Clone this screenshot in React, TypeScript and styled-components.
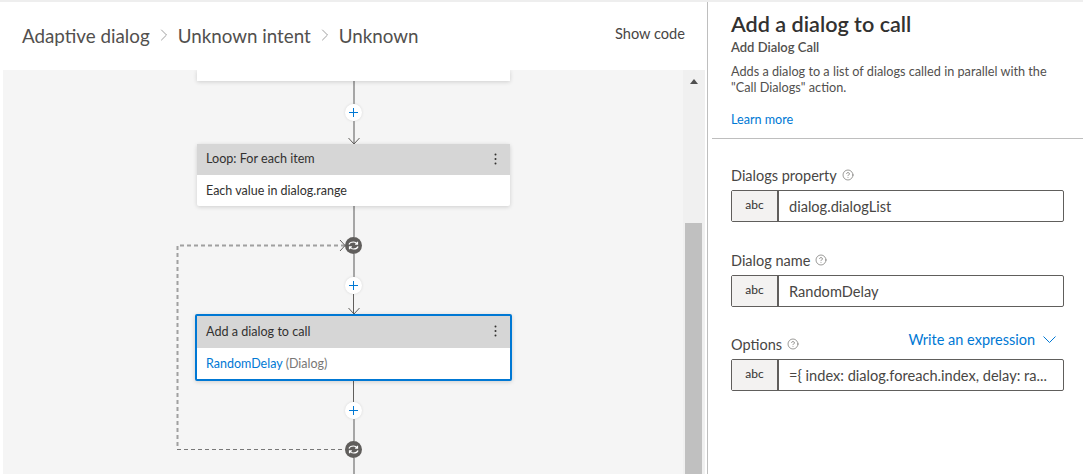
import React from "react";
import styled, { createGlobalStyle } from "styled-components";
import { ChevronRight, CircleHelp } from "lucide-react";

const GlobalStyle = createGlobalStyle`
  html, body {
    margin: 0;
    background: white;
    font-family: Lato, "Liberation Sans", sans-serif;
    color: rgb(50, 49, 48);
  }
`;

const Page = styled.div`
  width: 1083px;
  height: 474px;
  overflow: hidden;
  display: grid;
  grid-template-columns: 704px 1fr;
  padding-left: 3px;
  box-sizing: border-box;
  border-top: 2px solid rgb(238, 238, 238);
`;

const Left = styled.section`
  min-width: 0;
  display: flex;
  flex-direction: column;
`;

const Header = styled.header`
  height: 68px;
  box-sizing: border-box;
  padding: 0 22px 2px 19px;
  display: flex;
  align-items: center;
  justify-content: space-between;
`;

const Crumbs = styled.div`
  display: flex;
  align-items: center;
  gap: 4px;
  font-size: 18.8px;
  color: rgb(82, 80, 78);
`;

const CrumbIcon = styled(ChevronRight)`
  color: rgb(150, 150, 150);
`;

const ShowCode = styled.span`
  margin-bottom: 4px;
  font-size: 14.6px;
  color: rgb(72, 70, 68);
`;

const CanvasRow = styled.div`
  flex: 1;
  display: flex;
  padding-right: 2px;
  min-height: 0;
`;

const Canvas = styled.div`
  position: relative;
  flex: 1;
  background: rgb(245, 245, 245);
  overflow: hidden;
`;

const Flow = styled.div`
  width: 313px;
  margin-left: 194px;
  display: flex;
  flex-direction: column;
  align-items: center;
`;

const Card = styled.div<{ $selected?: boolean }>`
  position: relative;
  z-index: 1;
  flex: none;
  box-sizing: border-box;
  width: ${(p) => (p.$selected ? "317px" : "313px")};
  background: white;
  border: ${(p) => (p.$selected ? "2px solid rgb(0, 120, 212)" : "none")};
  border-radius: 2px;
  box-shadow: 0 1px 4px rgba(0, 0, 0, 0.16);
`;

const StubCard = styled(Card)`
  height: 11px;
  border-radius: 0;
`;

const CardHead = styled.div<{ $selected?: boolean }>`
  height: ${(p) => (p.$selected ? "32px" : "31px")};
  box-sizing: border-box;
  padding: 0 13px 2px 9px;
  display: flex;
  align-items: center;
  justify-content: space-between;
  background: rgb(214, 214, 214);
  font-size: 12.6px;
  color: rgb(50, 49, 48);
`;

const CardBody = styled.div`
  height: 31px;
  box-sizing: border-box;
  padding: 0 0 1px 9px;
  display: flex;
  align-items: center;
  gap: 3px;
  font-size: 12.5px;
  color: rgb(50, 49, 48);
`;

const DialogLink = styled.span`
  color: rgb(0, 120, 212);
`;

const Muted = styled.span`
  color: rgb(121, 119, 117);
`;

const Wire = styled.div<{ $h: number; $dark?: boolean }>`
  position: relative;
  flex: none;
  width: ${(p) => (p.$dark ? "1px" : "2px")};
  height: ${(p) => p.$h}px;
  background: ${(p) => (p.$dark ? "rgb(96, 94, 92)" : "rgb(166, 166, 166)")};
`;

const ArrowTip = styled.svg`
  position: absolute;
  left: 50%;
  bottom: -1px;
  transform: translateX(-50%);
  width: 13px;
  height: 8px;
  fill: none;
  stroke: rgb(96, 94, 92);
  stroke-width: 1;
`;

const PlusButton = styled.div`
  flex: none;
  width: 17px;
  height: 17px;
  border-radius: 50%;
  background: white;
  box-shadow: 0 0 3px rgba(0, 0, 0, 0.12);
  display: flex;
  align-items: center;
  justify-content: center;
  svg {
    width: 9px;
    height: 9px;
    stroke: rgb(0, 120, 212);
    stroke-width: 1;
  }
`;

const LoopNode = styled.div`
  position: relative;
  z-index: 1;
  flex: none;
  width: 17px;
  height: 17px;
  border-radius: 50%;
  background: rgb(96, 94, 92);
  display: flex;
  align-items: center;
  justify-content: center;
  svg {
    width: 11px;
    height: 9px;
    fill: none;
    stroke: white;
    stroke-width: 1.2;
  }
`;

const LoopEdge = styled.svg`
  position: absolute;
  left: 0;
  top: 0;
  fill: none;
  pointer-events: none;
`;

const ScrollTrack = styled.div`
  flex: none;
  width: 22px;
  background: rgb(240, 240, 240);
  display: flex;
  flex-direction: column;
  align-items: center;
  padding: 9px 3px 0 2px;
  box-sizing: border-box;
`;

const ScrollArrow = styled.div`
  flex: none;
  width: 0;
  height: 0;
  border-left: 4px solid transparent;
  border-right: 4px solid transparent;
  border-bottom: 5px solid rgb(80, 80, 80);
`;

const ScrollThumb = styled.div`
  width: 17px;
  flex: 1;
  margin-top: 139px;
  background: rgb(192, 192, 192);
`;

const Panel = styled.aside`
  min-width: 0;
  border-left: 1px solid rgb(190, 190, 190);
  padding-left: 4px;
`;

const PanelIntro = styled.div`
  height: 137px;
  box-sizing: border-box;
  border-bottom: 1px solid rgb(190, 190, 190);
  padding: 10px 0 0 19px;
`;

const PanelTitle = styled.h1`
  margin: 0;
  font-size: 21.6px;
  font-weight: 600;
  line-height: 24px;
  color: rgb(50, 49, 48);
`;

const PanelSub = styled.div`
  margin-top: 3px;
  font-size: 13px;
  font-weight: 600;
  line-height: 16px;
  color: rgb(82, 80, 78);
`;

const PanelText = styled.p`
  margin: 8px 0 0;
  width: 330px;
  font-size: 12.7px;
  line-height: 16px;
  color: rgb(82, 80, 78);
`;

const LearnMore = styled.a`
  display: block;
  margin-top: 17px;
  font-size: 12.6px;
  line-height: 16px;
  color: rgb(0, 120, 212);
`;

const Form = styled.div`
  padding: 25px 19px 0 19px;
  display: flex;
  flex-direction: column;
  gap: 27px;
`;

const Field = styled.div<{ $tight?: boolean }>`
  display: flex;
  flex-direction: column;
  margin-top: ${(p) => (p.$tight ? "-1px" : "0")};
`;

const LabelRow = styled.div`
  height: 26px;
  padding-bottom: 4px;
  box-sizing: border-box;
  display: flex;
  align-items: center;
  justify-content: space-between;
`;

const Label = styled.label`
  display: flex;
  align-items: center;
  gap: 5px;
  font-size: 14.5px;
  color: rgb(72, 70, 68);
`;

const HelpIcon = styled(CircleHelp)`
  color: rgb(96, 94, 92);
`;

const ExpressionLink = styled.a`
  display: flex;
  align-items: center;
  gap: 8px;
  margin: -9px 8px 0 0;
  font-size: 14.5px;
  color: rgb(0, 120, 212);
  svg {
    width: 13px;
    height: 7px;
    fill: none;
    stroke: rgb(0, 120, 212);
  }
`;

const InputGroup = styled.div`
  height: 32px;
  display: flex;
  box-sizing: border-box;
  border: 1px solid rgb(96, 94, 92);
  border-radius: 2px;
`;

const TypeTag = styled.div`
  flex: none;
  width: 47px;
  box-sizing: border-box;
  border-right: 2px solid rgb(96, 94, 92);
  background: rgb(243, 242, 241);
  display: flex;
  align-items: center;
  justify-content: center;
  padding-bottom: 3px;
  font-size: 12px;
  color: rgb(50, 49, 48);
`;

const InputText = styled.div`
  flex: 1;
  display: flex;
  align-items: center;
  padding-left: 10px;
  font-size: 14.6px;
  color: rgb(72, 70, 68);
  white-space: nowrap;
`;

const Kebab = () => (
  <svg width="3" height="12" viewBox="0 0 3 12" fill="rgb(50, 49, 48)">
    <circle cx="1.5" cy="1.5" r="1" />
    <circle cx="1.5" cy="6" r="1" />
    <circle cx="1.5" cy="10.5" r="1" />
  </svg>
);

const Plus = () => (
  <PlusButton>
    <svg viewBox="0 0 9 9">
      <path d="M4.500 0v9M0 4.500h9" />
    </svg>
  </PlusButton>
);

const Loop = () => (
  <LoopNode>
    <svg viewBox="0 0 11 9">
      <path d="M1 3.500C1.500 1.800 3.200 1 5.500 1c1.700 0 3 .7 3.700 1.800M9.500.8v2.400H7.100" />
      <path d="M10 5.500C9.500 7.200 7.800 8 5.500 8c-1.700 0-3-.7-3.700-1.800M1.500 8.200V5.800h2.400" />
    </svg>
  </LoopNode>
);

const Arrow = () => (
  <ArrowTip viewBox="0 0 13 8">
    <path d="M1 1l5.500 6L12 1" />
  </ArrowTip>
);

const fields = [
  { label: "Dialogs property", value: "dialog.dialogList" },
  { label: "Dialog name", value: "RandomDelay" },
  { label: "Options", value: "={ index: dialog.foreach.index, delay: ra...", expression: true },
];

export default function App() {
  return (
    <>
      <GlobalStyle />
      <Page>
        <Left>
          <Header>
            <Crumbs>
              Adaptive dialog
              <CrumbIcon size={20} strokeWidth={1.1} />
              Unknown intent
              <CrumbIcon size={20} strokeWidth={1.1} />
              Unknown
            </Crumbs>
            <ShowCode>Show code</ShowCode>
          </Header>
          <CanvasRow>
            <Canvas>
              <LoopEdge width="680" height="404">
                <path d="M342 175.500H174.500V379" stroke="rgb(160,160,160)" strokeWidth="2" strokeDasharray="4 3" />
                <path d="M174 379.500H342" stroke="rgb(120,120,120)" strokeDasharray="4 3" />
                <path d="M337 170l5 5.500-5 5.500" stroke="rgb(96,94,92)" />
              </LoopEdge>
              <Flow>
                <StubCard />
                <Wire $h={23} />
                <Plus />
                <Wire $h={23}>
                  <Arrow />
                </Wire>
                <Card>
                  <CardHead>
                    Loop: For each item
                    <Kebab />
                  </CardHead>
                  <CardBody>Each value in dialog.range</CardBody>
                </Card>
                <Wire $h={31} />
                <Loop />
                <Wire $h={23} />
                <Plus />
                <Wire $h={20} $dark>
                  <Arrow />
                </Wire>
                <Card $selected>
                  <CardHead $selected>
                    Add a dialog to call
                    <Kebab />
                  </CardHead>
                  <CardBody>
                    <DialogLink>RandomDelay</DialogLink>
                    <Muted>(Dialog)</Muted>
                  </CardBody>
                </Card>
                <Wire $h={21} $dark />
                <Plus />
                <Wire $h={22} />
                <Loop />
                <Wire $h={16} />
              </Flow>
            </Canvas>
            <ScrollTrack>
              <ScrollArrow />
              <ScrollThumb />
            </ScrollTrack>
          </CanvasRow>
        </Left>
        <Panel>
          <PanelIntro>
            <PanelTitle>Add a dialog to call</PanelTitle>
            <PanelSub>Add Dialog Call</PanelSub>
            <PanelText>
              Adds a dialog to a list of dialogs called in parallel with the "Call Dialogs" action.
            </PanelText>
            <LearnMore>Learn more</LearnMore>
          </PanelIntro>
          <Form>
            {fields.map((f) => (
              <Field key={f.label} $tight={f.expression}>
                <LabelRow>
                  <Label>
                    {f.label}
                    <HelpIcon size={12} strokeWidth={1.25} />
                  </Label>
                  {f.expression && (
                    <ExpressionLink>
                      Write an expression
                      <svg viewBox="0 0 13 7">
                        <path d="M.5.500l6 6 6-6" />
                      </svg>
                    </ExpressionLink>
                  )}
                </LabelRow>
                <InputGroup>
                  <TypeTag>abc</TypeTag>
                  <InputText>{f.value}</InputText>
                </InputGroup>
              </Field>
            ))}
          </Form>
        </Panel>
      </Page>
    </>
  );
}
